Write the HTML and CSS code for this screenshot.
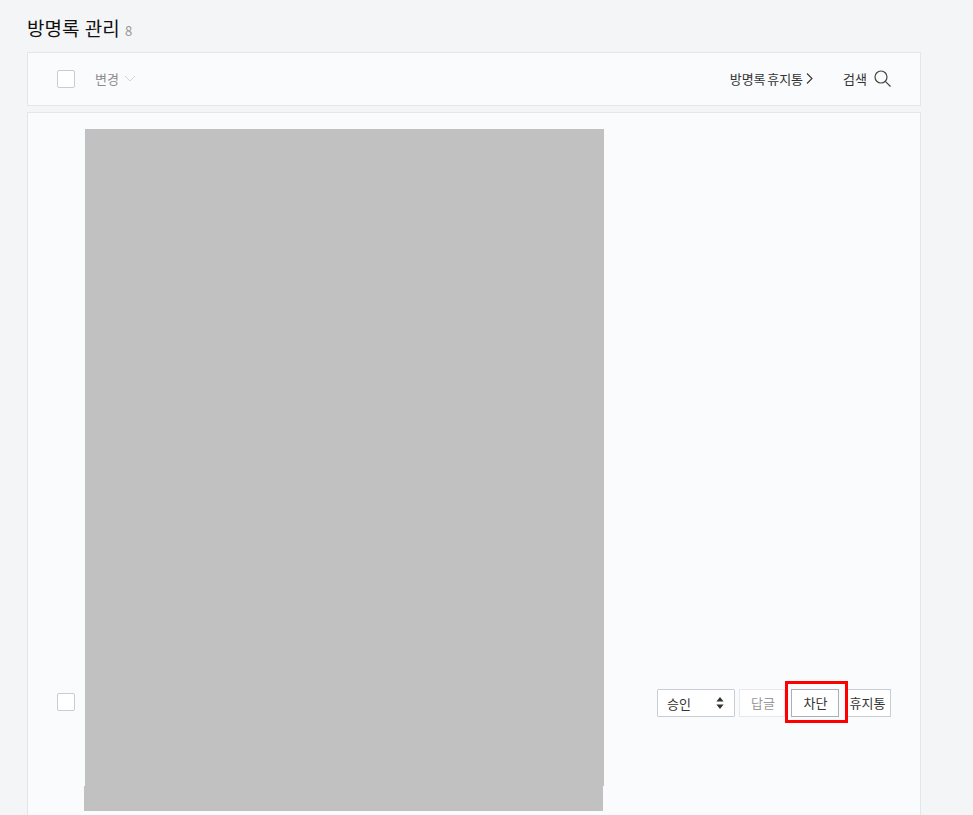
FILE: index.html
```html
<!DOCTYPE HTML>
<html lang="ko">
<head>
<meta http-equiv="Content-Type" content="text/html; charset=utf-8" />
<title>방명록 관리</title>
<link rel="stylesheet" href="styles.css">
</head>
<body>
	<div class="content">
		<h2 class="pageTitle">방명록 관리 <span class="count">8</span></h2>

		<div class="toolbar">
			<span class="check"></span>
			<span class="change">변경
				<svg class="changeArrow" width="12" height="7" viewBox="0 0 12 7"><path d="M1 1l5 5 5-5" fill="none" stroke="#d3d6db" stroke-width="1"/></svg>
			</span>
			<span class="trash">방명록 휴지통
				<svg width="7" height="11" viewBox="0 0 7 11"><path d="M1 .5l5 5-5 5" fill="none" stroke="#333" stroke-width="1.1"/></svg>
			</span>
			<span class="search">검색
				<svg width="17" height="17" viewBox="0 0 17 17"><circle cx="7" cy="7" r="6" fill="none" stroke="#444" stroke-width="1.2"/><path d="M11.3 11.3l5.2 5.2" fill="none" stroke="#444" stroke-width="1.2"/></svg>
			</span>
		</div>

		<div class="entryList">
			<span class="check entryCheck"></span>
			<div class="entryBody">
				<div class="hidden1"></div>
				<div class="hidden2"></div>
			</div>
			<div class="actions">
				<div class="selectBox">승인
					<svg width="8" height="12" viewBox="0 0 8 12"><path d="M4 0l3.6 4.6H.4zM4 12L.4 7.4h7.2z" fill="#333"/></svg>
				</div>
				<a class="btn btnOff">답글</a>
				<span class="marked"><a class="btn btnBlock">차단</a></span>
				<a class="btn btnTrash">휴지통</a>
			</div>
		</div>
	</div>
</body>
</html>
```

FILE: styles.css
```css
* {
	margin: 0;
	padding: 0;
	box-sizing: border-box;
}

html, body {
	height: 815px;
	overflow: hidden;
}

body {
	background: #f4f5f7;
	font-family: "Noto Sans CJK KR", "Noto Sans", sans-serif;
	color: #333;
}

.content {
	width: 894px;
	margin-left: 27px;
	padding-top: 13px;
}

.pageTitle {
	height: 39px;
	font-size: 19px;
	font-weight: 400;
	line-height: 30px;
	color: #111;
}

.count {
	font-size: 13px;
	color: #999;
}

/****상단 툴바*****/
.toolbar {
	display: flex;
	align-items: center;
	height: 54px;
	padding: 0 29px;
	background: #fafbfd;
	border: 1px solid #e3e6ee;
	font-size: 13px;
	line-height: 17px;
}

.check {
	display: block;
	flex: none;
	width: 18px;
	height: 18px;
	background: #fff;
	border: 1px solid #c8ccd4;
	border-radius: 2px;
}

.change {
	display: flex;
	align-items: center;
	margin-left: 20px;
	margin-top: -1px;
	color: #8c8c8c;
}

.changeArrow {
	margin-left: 5px;
}

.trash {
	display: flex;
	align-items: center;
	gap: 3px;
	margin-left: auto;
	margin-top: -1px;
	word-spacing: -2px;
	color: #333;
}

.search {
	display: flex;
	align-items: center;
	gap: 7px;
	margin-left: 30px;
	margin-top: -1px;
	color: #333;
}

/****방명록 목록*****/
.entryList {
	display: flex;
	align-items: flex-start;
	height: 720px;
	margin-top: 6px;
	padding: 16px 29px;
	background: #fafbfd;
	border: 1px solid #e3e6ee;
}

.entryCheck {
	margin-top: 564px;
}

.entryBody {
	width: 519px;
	margin-left: 10px;
}

.hidden1 {
	height: 657px;
	background: #c1c1c1;
}

.hidden2 {
	width: 519px;
	height: 25px;
	margin-left: -1px;
	background: #c1c1c1;
}

.actions {
	display: flex;
	margin-top: 560px;
	margin-left: auto;
	font-size: 13px;
}

.selectBox {
	display: flex;
	align-items: center;
	justify-content: space-between;
	width: 78px;
	height: 28px;
	padding: 0 10px 0 9px;
	background: #fff;
	border: 1px solid #c8ccd4;
	border-radius: 1px;
	color: #333;
}

.btn {
	display: block;
	height: 28px;
	line-height: 25px;
	text-align: center;
	background: #fff;
	border: 1px solid #c8ccd4;
}

.btnOff {
	width: 46px;
	margin-left: 4px;
	padding-left: 2px;
	border-color: #e6e8ee;
	color: #999;
}

.marked {
	position: relative;
	display: block;
	margin-left: 6px;
}

/* 빨간 표시 박스 */
.marked::after {
	content: "";
	box-sizing: border-box;
	position: absolute;
	left: -6px;
	top: -8px;
	width: 63px;
	height: 42px;
	border: 3px solid #f00;
}

.btnBlock {
	width: 48px;
	padding-left: 1px;
	border-color: #a9aeb8;
}

.btnTrash {
	width: 44px;
	margin-left: 8px;
	padding-right: 3px;
	white-space: nowrap;
}
```
